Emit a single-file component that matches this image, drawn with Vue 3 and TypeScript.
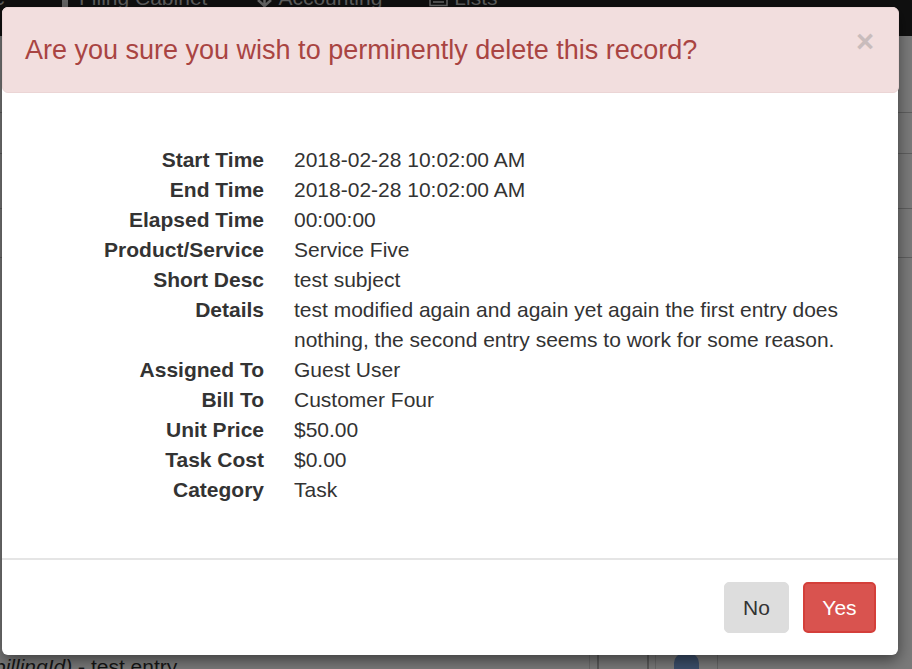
<script setup lang="ts">
interface Row { label: string; value: string }
const rows: Row[] = [
  { label: 'Start Time', value: '2018-02-28 10:02:00 AM' },
  { label: 'End Time', value: '2018-02-28 10:02:00 AM' },
  { label: 'Elapsed Time', value: '00:00:00' },
  { label: 'Product/Service', value: 'Service Five' },
  { label: 'Short Desc', value: 'test subject' },
  { label: 'Details', value: 'test modified again and again yet again the first entry does nothing, the second entry seems to work for some reason.' },
  { label: 'Assigned To', value: 'Guest User' },
  { label: 'Bill To', value: 'Customer Four' },
  { label: 'Unit Price', value: '$50.00' },
  { label: 'Task Cost', value: '$0.00' },
  { label: 'Category', value: 'Task' },
]
const bgRowHeights: number[] = [77, 41, 55, 49]
</script>

<template>
  <div class="page">
    <nav class="navbar">
      <span class="nav-stub">c</span>
      <span class="nav-item first">
        <svg class="ico" width="6" height="8" viewBox="0 0 6 8"><rect width="6" height="8" fill="#666" /></svg>
        <span>Filing Cabinet</span>
      </span>
      <span class="nav-item second">
        <svg class="ico" width="15" height="8" viewBox="0 0 15 8"><path d="M1 0 L7.5 6 L14 0 M7.5 0 V8" fill="none" stroke="#666" stroke-width="2.5" /></svg>
        <span>Accounting</span>
      </span>
      <span class="nav-item third">
        <svg class="ico" width="19" height="8" viewBox="0 0 19 8"><path d="M1 0 V5.5 H18 V0 M4 2 H15" fill="none" stroke="#666" stroke-width="1.5" /></svg>
        <span>Lists</span>
      </span>
    </nav>
    <div class="rest">
      <div v-for="(h, i) in bgRowHeights" :key="i" class="bg-row" :style="{ height: h + 'px' }"></div>
      <div class="spacer"></div>
      <div class="bottom-row">
        <p class="under"><em>billingId)</em> <b>-</b> test entry</p>
        <span class="cell c1"></span>
        <span class="cell c2"></span>
        <span class="cell c3"></span>
        <span class="cell c4"><i class="dot"></i></span>
      </div>
    </div>
    <div class="modal">
      <header class="head">
        <h4 class="title">Are you sure you wish to perminently delete this record?</h4>
        <span class="close">×</span>
      </header>
      <section class="body">
        <dl class="list">
          <template v-for="r in rows" :key="r.label">
            <dt>{{ r.label }}</dt>
            <dd>{{ r.value }}</dd>
          </template>
        </dl>
      </section>
      <footer class="foot">
        <button class="btn no">No</button>
        <button class="btn yes">Yes</button>
      </footer>
    </div>
  </div>
</template>

<style>
html, body { margin: 0; overflow: hidden; }
</style>

<style scoped>
.page {
  position: relative;
  width: 912px;
  height: 669px;
  overflow: hidden;
  background: #7a7a7a;
  font-family: "Liberation Sans", Arial, sans-serif;
  color: #333;
  display: flex;
  flex-direction: column;
}
.navbar {
  height: 36px;
  flex: none;
  background: #101010;
  overflow: hidden;
  display: flex;
  align-items: flex-start;
  font-size: 21px;
  line-height: 20px;
  color: #5e5e5e;
}
.nav-stub {
  width: 62px;
  margin-top: -12px;
  margin-left: -6px;
  flex: none;
}
.nav-item {
  margin-top: -12px;
  display: flex;
  white-space: nowrap;
  flex: none;
}
.ico {
  margin-top: 12px;
  flex: none;
}
.first { margin-left: 6px; }
.first .ico { margin-right: 11px; }
.second { margin-left: 50px; }
.second .ico { margin-right: 6px; }
.third { margin-left: 47px; }
.third .ico { margin-right: 6px; }
.rest {
  flex: 1;
  min-height: 0;
  display: flex;
  flex-direction: column;
}
.bg-row {
  box-sizing: border-box;
  flex: none;
  border-bottom: 1px solid #5f5f5f;
}
.spacer { flex: 1; }
.bottom-row {
  height: 30px;
  flex: none;
  display: flex;
  overflow: hidden;
}
.under {
  width: 589px;
  flex: none;
  margin: 16px 0 0 -6px;
  font-size: 21px;
  line-height: 24px;
  color: #161616;
  white-space: nowrap;
}
.cell {
  flex: none;
  border-left: 1px solid #6a6a6a;
  box-sizing: border-box;
}
.c1 { width: 8px; margin-left: 6px; }
.c2 { width: 50px; border-left: 2px solid #5a5a5a; }
.c3 { width: 8px; border-left: 2px solid #5a5a5a; }
.c4 {
  width: 63px;
  padding-left: 18px;
  border-right: 1px solid #666;
}
.dot {
  display: block;
  width: 25px;
  height: 40px;
  margin-top: 14px;
  border-radius: 10px;
  background: #3c4f6b;
}
.modal {
  position: absolute;
  left: 2px;
  top: 7px;
  width: 896px;
  height: 648px;
  background: #fff;
  border-radius: 6px;
  box-shadow: 0 5px 15px rgba(0, 0, 0, 0.5);
  display: flex;
  flex-direction: column;
}
.head {
  height: 86px;
  flex: none;
  box-sizing: border-box;
  margin-right: -1px;
  background: #f2dede;
  border: 1px solid #ebd5d5;
  border-radius: 6px;
  padding: 0 24px 0 22px;
  display: flex;
  align-items: center;
  justify-content: space-between;
}
.title {
  margin: 0;
  font-size: 27px;
  font-weight: 400;
  color: #a94442;
}
.close {
  font-size: 31px;
  font-weight: 700;
  line-height: 1;
  color: #c9bcbc;
  margin-bottom: 17px;
}
.body {
  flex: 1;
  padding-top: 52px;
}
.list {
  margin: 0;
  display: grid;
  grid-template-columns: 262px 552px;
  column-gap: 30px;
  font-size: 21px;
  line-height: 30px;
}
dt {
  font-weight: 700;
  text-align: right;
}
dd { margin: 0; }
.foot {
  height: 97px;
  flex: none;
  box-sizing: border-box;
  border-top: 2px solid #e5e5e5;
  padding: 22px 22px 0 0;
  display: flex;
  justify-content: flex-end;
  align-items: flex-start;
  gap: 14px;
}
.btn {
  height: 51px;
  box-sizing: border-box;
  border-radius: 5px;
  font-family: inherit;
  font-size: 21px;
  padding: 0;
}
.no {
  width: 65px;
  background: #ddd;
  border: 1px solid #ddd;
  color: #333;
}
.yes {
  width: 73px;
  background: #d9534f;
  border: 2px solid #d43f3a;
  color: #fff;
}
</style>
